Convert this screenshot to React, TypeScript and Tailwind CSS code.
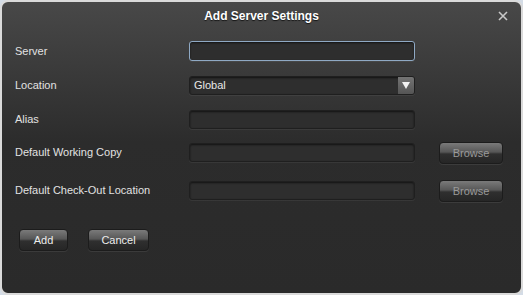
import React from 'react';

const font = { fontFamily: '"Liberation Sans", Arial, sans-serif' };

function Field({ focused, children }: { focused?: boolean; children?: React.ReactNode }) {
  return (
    <div
      className={
        'relative flex h-full w-[226px] items-center rounded-[3px] border bg-[#2e2e2e] shadow-[inset_0_1px_2px_rgba(0,0,0,0.6),0_1px_0_rgba(255,255,255,0.06)] ' +
        (focused ? 'border-[#8fa9c4] shadow-[0_0_0_1px_rgba(120,150,185,0.35)]' : 'border-[#1f1f1f]')
      }
    >
      {children}
    </div>
  );
}

function Button({ label, width, dim }: { label: string; width: string; dim?: boolean }) {
  return (
    <button
      className={
        'h-[22px] rounded-[4px] border border-[#1c1c1c] bg-[linear-gradient(to_bottom,#7a7a7a_0%,#575757_45%,#2f2f2f_55%,#262626_100%)] text-[11px] shadow-[0_1px_0_rgba(255,255,255,0.08)] ' +
        width +
        (dim ? ' text-[#9a9a9a]' : ' text-[#ececec]')
      }
      style={font}
    >
      {label}
    </button>
  );
}

function Row({ label, className, children }: { label: string; className: string; children: React.ReactNode }) {
  return (
    <div className={'flex items-center pl-[13px] ' + className}>
      <span className="w-[174px] text-[11px] text-[#e2e2e2]">{label}</span>
      {children}
    </div>
  );
}

export default function App() {
  return (
    <div className="h-[295px] w-[523px] bg-[#d4dce6]" style={font}>
      <div className="flex h-full w-full flex-col rounded-[8px] border-2 border-[#dadada] bg-[linear-gradient(to_bottom,#484848_0px,#3a3a3a_70px,#2c2c2c_140px,#2a2a2a_100%)]">
        <div className="relative flex h-[28px] items-center justify-center">
          <span className="text-[12px] font-bold text-white [text-shadow:0_1px_1px_rgba(0,0,0,0.7)]">
            Add Server Settings
          </span>
          <svg className="absolute right-[13px] top-[9px]" width="10" height="10" viewBox="0 0 10 10">
            <path d="M1 1L9 9M9 1L1 9" stroke="#c8c8c8" strokeWidth="1.6" />
          </svg>
        </div>

        <Row label="Server" className="mt-[11px] h-[20px]">
          <Field focused />
        </Row>

        <Row label="Location" className="mt-[15px] h-[19px]">
          <Field>
            <span className="pl-[4px] text-[11px] text-[#e8e8e8]">Global</span>
            <div className="absolute right-0 top-0 flex h-full w-[16px] items-center justify-center rounded-r-[2px] bg-[linear-gradient(to_bottom,#747474,#555555)]">
              <svg width="10" height="9" viewBox="0 0 10 9">
                <path d="M1 1H9L5 8Z" fill="#f2f2f2" />
              </svg>
            </div>
          </Field>
        </Row>

        <Row label="Alias" className="mt-[15px] h-[19px]">
          <Field />
        </Row>

        <Row label="Default Working Copy" className="mt-[12px] h-[22px]">
          <div className="h-[19px]">
            <Field />
          </div>
          <div className="ml-[24px]">
            <Button label="Browse" width="w-[64px]" dim />
          </div>
        </Row>

        <Row label="Default Check-Out Location" className="mt-[16px] h-[22px]">
          <div className="h-[19px]">
            <Field />
          </div>
          <div className="ml-[24px]">
            <Button label="Browse" width="w-[64px]" dim />
          </div>
        </Row>

        <div className="mt-[28px] flex gap-[20px] pl-[17px]">
          <Button label="Add" width="w-[49px]" />
          <Button label="Cancel" width="w-[61px]" />
        </div>
      </div>
    </div>
  );
}
